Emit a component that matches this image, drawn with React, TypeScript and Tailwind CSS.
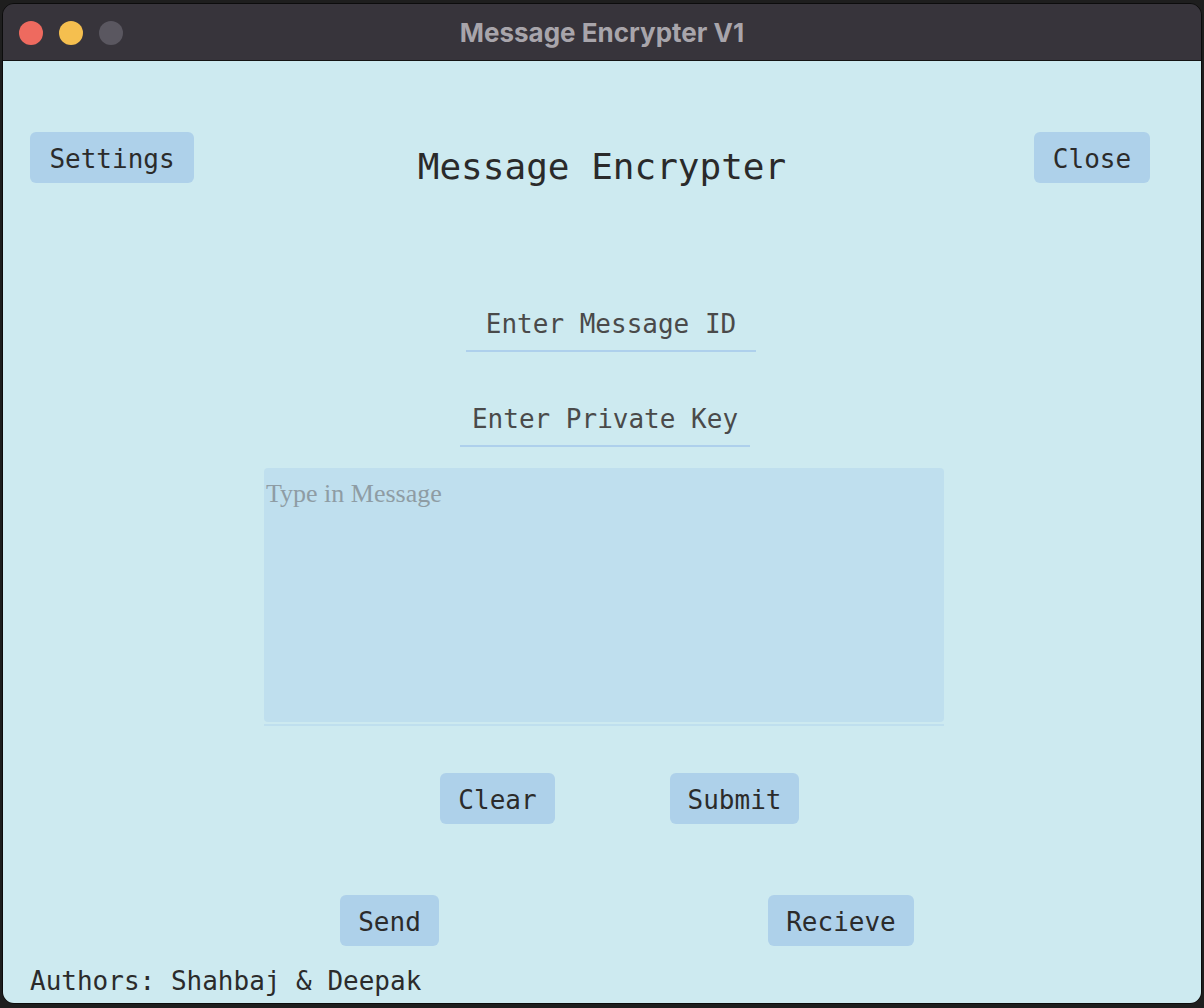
const mono = "font-['DejaVu_Sans_Mono',monospace]";

function Btn({ label, className = '' }: { label: string; className?: string }) {
  return (
    <button
      className={`${mono} h-[51px] px-[18px] pt-[4px] flex items-center justify-center rounded-[6px] bg-[#aed1ea] text-[26px] text-[#2b2b2b] ${className}`}
    >
      {label}
    </button>
  );
}

function LineInput({ label, className = '' }: { label: string; className?: string }) {
  return (
    <div
      className={`${mono} w-[290px] border-b-2 border-[#aed0ec] pb-[11px] text-center text-[26px] leading-[30px] text-[#4a4a4a] ${className}`}
    >
      {label}
    </div>
  );
}

export default function App() {
  return (
    <div className="w-[1204px] h-[1008px] bg-[#1e1e1e] pt-[3px] pl-[2px]">
      <div className="w-[1200px] h-[1001px] rounded-[12px] border border-[#0c0c0c] overflow-hidden flex flex-col">
        {/* title bar */}
        <div className="h-[57px] shrink-0 bg-[#37343b] border-b border-[#141414] flex items-center relative">
          <div className="flex items-center gap-[16px] pl-[16px] pt-[1px]">
            <span className="w-[24px] h-[24px] rounded-full bg-[#ee6a5f]" />
            <span className="w-[24px] h-[24px] rounded-full bg-[#f5bf4f]" />
            <span className="w-[24px] h-[24px] rounded-full bg-[#5a5760]" />
          </div>
          <div className="absolute inset-0 flex items-center justify-center font-['Inter',sans-serif] font-bold text-[26px] text-[#a8a5ab]">
            Message Encrypter V1
          </div>
        </div>

        {/* content */}
        <div className="flex-1 bg-[#cdeaf0] flex flex-col">
          <div className="mt-[71px] grid grid-cols-[1fr_auto_1fr] items-start">
            <div className="pl-[27px]">
              <Btn label="Settings" className="w-[164px]" />
            </div>
            <h1 className={`${mono} mt-[14px] text-[36px] leading-[42px] text-[#2a2a2a]`}>
              Message Encrypter
            </h1>
            <div className="flex justify-end pr-[51px]">
              <Btn label="Close" className="w-[116px]" />
            </div>
          </div>

          <LineInput label="Enter Message ID" className="mt-[121px] ml-[463px]" />
          <LineInput label="Enter Private Key" className="mt-[52px] ml-[457px]" />

          <div className="mt-[21px] ml-[261px] w-[680px]">
            <div className="h-[254px] rounded-[4px] bg-[#bfdfee] pt-[11px] pl-[2px] font-['Liberation_Serif',serif] text-[26px] leading-[30px] text-[#8e9ca4]">
              Type in Message
            </div>
            <div className="mt-[2px] h-[2px] bg-[#bfdfee]" />
          </div>

          <div className="mt-[47px] flex pl-[437px] gap-[115px]">
            <Btn label="Clear" className="w-[115px]" />
            <Btn label="Submit" className="w-[129px]" />
          </div>

          <div className="mt-[71px] flex pl-[337px] gap-[329px]">
            <Btn label="Send" className="w-[99px]" />
            <Btn label="Recieve" className="w-[146px]" />
          </div>

          <div className={`${mono} mt-[20px] pl-[27px] text-[26px] leading-[30px] text-[#2b2b2b]`}>
            Authors: Shahbaj &amp; Deepak
          </div>
        </div>
      </div>
    </div>
  );
}
